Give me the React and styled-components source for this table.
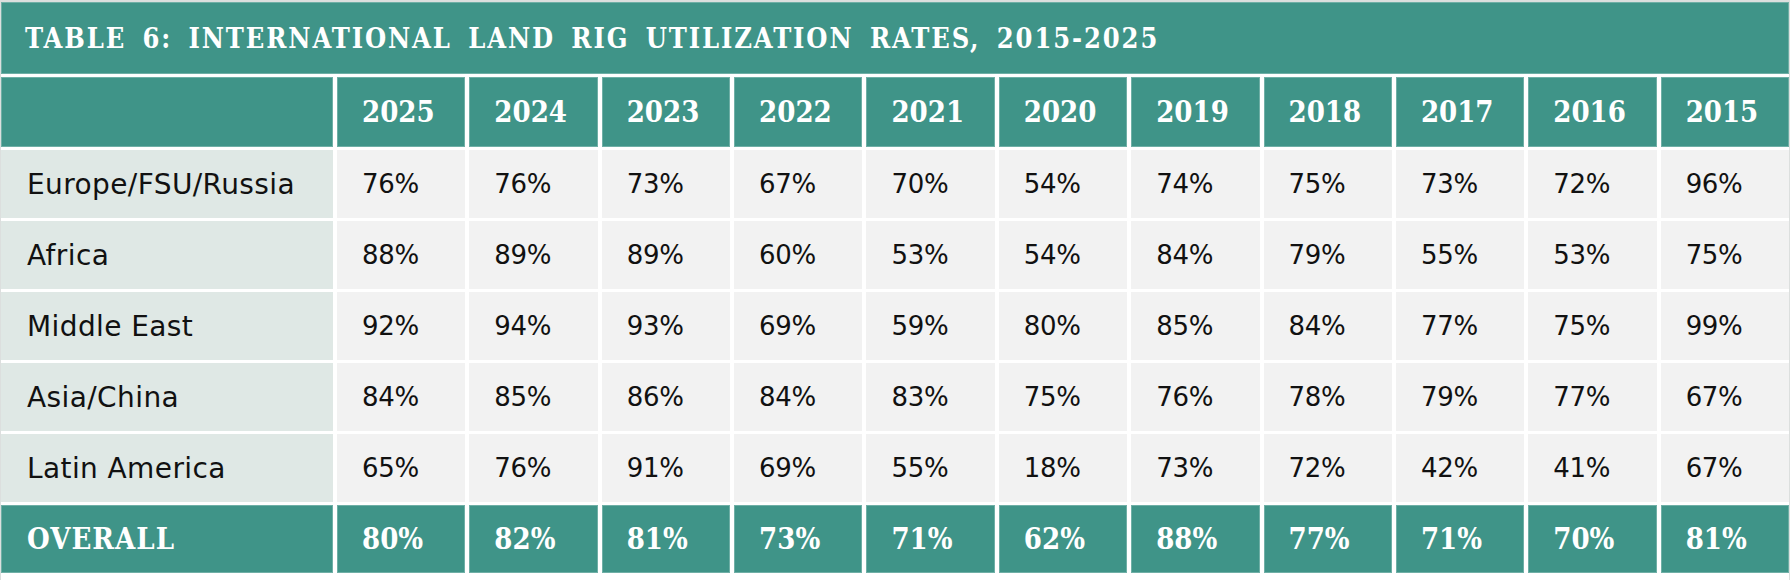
import React from 'react'
import styled, { createGlobalStyle } from 'styled-components'

const years = ['2025', '2024', '2023', '2022', '2021', '2020', '2019', '2018', '2017', '2016', '2015']

const rows = [
  { region: 'Europe/FSU/Russia', values: [76, 76, 73, 67, 70, 54, 74, 75, 73, 72, 96] },
  { region: 'Africa', values: [88, 89, 89, 60, 53, 54, 84, 79, 55, 53, 75] },
  { region: 'Middle East', values: [92, 94, 93, 69, 59, 80, 85, 84, 77, 75, 99] },
  { region: 'Asia/China', values: [84, 85, 86, 84, 83, 75, 76, 78, 79, 77, 67] },
  { region: 'Latin America', values: [65, 76, 91, 69, 55, 18, 73, 72, 42, 41, 67] },
]

const overall = [80, 82, 81, 73, 71, 62, 88, 77, 71, 70, 81]

export default function App() {
  return (
    <>
      <GlobalStyle />
      <Frame>
        <Title>Table 6: International Land Rig Utilization Rates, 2015-2025</Title>
        <Grid>
          <HeadCell />
          {years.map((y) => (
            <HeadCell key={y}>{y}</HeadCell>
          ))}

          {rows.map((r) => (
            <React.Fragment key={r.region}>
              <RegionCell>{r.region}</RegionCell>
              {r.values.map((v, i) => (
                <ValueCell key={i}>{v}%</ValueCell>
              ))}
            </React.Fragment>
          ))}

          <TotalCell $label>Overall</TotalCell>
          {overall.map((v, i) => (
            <TotalCell key={i}>{v}%</TotalCell>
          ))}
        </Grid>
      </Frame>
    </>
  )
}

const GlobalStyle = createGlobalStyle`
  body {
    margin: 0;
    background: #fff;
  }
`

const teal = '#3f9488'
const slab = `"DejaVu Serif Condensed", "DejaVu Serif", serif`

const Frame = styled.div`
  width: 1790px;
  box-sizing: border-box;
  border: 1px solid #dcdfde;
  border-top-width: 2px;
  border-bottom: none;
  background: #fff;
`

const Title = styled.div`
  height: 72px;
  display: flex;
  align-items: center;
  padding-left: 24px;
  background: ${teal};
  box-shadow: inset 0 0 0 1px rgba(255, 255, 255, 0.25);
  color: #fff;
  font-family: ${slab};
  font-stretch: condensed;
  font-weight: 700;
  font-size: 27px;
  letter-spacing: 1.9px;
  word-spacing: 6px;
  text-transform: uppercase;
`

const Grid = styled.div`
  display: grid;
  grid-template-columns: 332px repeat(11, 1fr);
  grid-template-rows: 70px repeat(6, 68px);
  gap: 3px 4px;
  padding-top: 3px;
  padding-bottom: 7px;
  background: #fff;
`

const Cell = styled.div`
  display: flex;
  align-items: center;
  padding-left: 25px;
  white-space: nowrap;
`

const HeadCell = styled(Cell)`
  background: ${teal};
  box-shadow: inset 0 0 0 1px rgba(255, 255, 255, 0.25);
  color: #fff;
  font-family: ${slab};
  font-stretch: condensed;
  font-weight: 700;
  font-size: 29px;
`

const TotalCell = styled(HeadCell)`
  text-transform: uppercase;
  letter-spacing: ${(p) => (p.$label ? '1px' : '0')};
  padding-left: ${(p) => (p.$label ? '26px' : '25px')};
`

const RegionCell = styled(Cell)`
  padding-left: 26px;
  background: #dfe8e5;
  color: #111;
  font-family: "DejaVu Sans", sans-serif;
  font-size: 28px;
  letter-spacing: 0.4px;
`

const ValueCell = styled(Cell)`
  background: #f2f2f2;
  color: #111;
  font-family: "DejaVu Sans", sans-serif;
  font-size: 26px;
  letter-spacing: -0.3px;
`
